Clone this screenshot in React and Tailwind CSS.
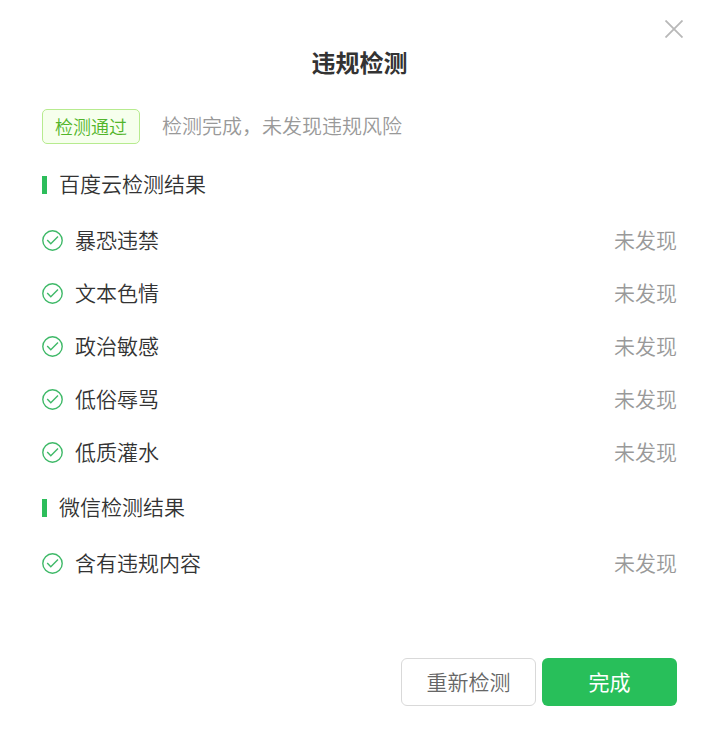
const groups = [
  {
    title: '百度云检测结果',
    items: ['暴恐违禁', '文本色情', '政治敏感', '低俗辱骂', '低质灌水'],
  },
  { title: '微信检测结果', items: ['含有违规内容'] },
];

function CheckCircle() {
  return (
    <svg className="size-[21px] shrink-0" viewBox="0 0 21 21" fill="none" stroke="#3fb968" strokeWidth="1.4" aria-hidden="true">
      <circle cx="10.5" cy="10.5" r="9.7" />
      <path d="M5.2 10 8.8 13.8 16 6.5" />
    </svg>
  );
}

function ResultGroup({ title, items }) {
  return (
    <section>
      <h2 className="flex h-8 items-center gap-3 text-[21px] leading-7 font-[350] text-[#333]">
        <span className="h-[18px] w-[5px] bg-[#2dbd5b]" />
        <span className="pb-1">{title}</span>
      </h2>
      <ul className="mt-[13px]">
        {items.map((item) => (
          <li key={item} className="flex h-[53px] items-center gap-3 text-[21px] leading-7">
            <CheckCircle />
            <span className="pb-1 text-[#333]">{item}</span>
            <span className="ml-auto pb-1 text-[#999]">未发现</span>
          </li>
        ))}
      </ul>
    </section>
  );
}

export default function App() {
  return (
    <div
      role="dialog"
      aria-labelledby="dialog-title"
      className="min-h-screen bg-white pb-[35px] font-['Noto_Sans_CJK_SC',sans-serif] font-[350]"
    >
      <div className="flex justify-end pt-5 pr-[25px]">
        <button type="button" aria-label="关闭" className="size-[18px] cursor-pointer">
          <svg className="size-[18px]" viewBox="0 0 18 18" fill="none" stroke="#b8b8b8" strokeWidth="1.8" aria-hidden="true">
            <path d="M0.5 0.5 17.5 17.5M17.5 0.5 0.5 17.5" />
          </svg>
        </button>
      </div>
      <div className="pr-[31px] pl-[42px]">
        <h1 id="dialog-title" className="mt-2 text-center text-2xl leading-8 font-bold text-[#333]">
          违规检测
        </h1>
        <div className="mt-[31px] flex items-center gap-[22px]">
          <span className="flex h-[35px] items-center rounded-[5px] border border-[#b7eb8f] bg-[#f6ffed] px-3 pb-0.5 text-lg text-[#52b52a]">
            检测通过
          </span>
          <span className="pb-0.5 text-xl text-[#999]">{'检测完成\uff0c未发现违规风险'}</span>
        </div>
        <div className="mt-[25px] flex flex-col gap-[13px]">
          {groups.map((group) => (
            <ResultGroup key={group.title} {...group} />
          ))}
        </div>
        <div className="mt-[68px] flex justify-end gap-[6px] text-[21px]">
          <button type="button" className="h-12 w-[135px] cursor-pointer rounded-md border border-[#d9d9d9] bg-white text-[#666]">
            重新检测
          </button>
          <button type="button" className="h-12 w-[135px] cursor-pointer rounded-md bg-[#28bf5a] font-normal text-white">
            完成
          </button>
        </div>
      </div>
    </div>
  );
}
